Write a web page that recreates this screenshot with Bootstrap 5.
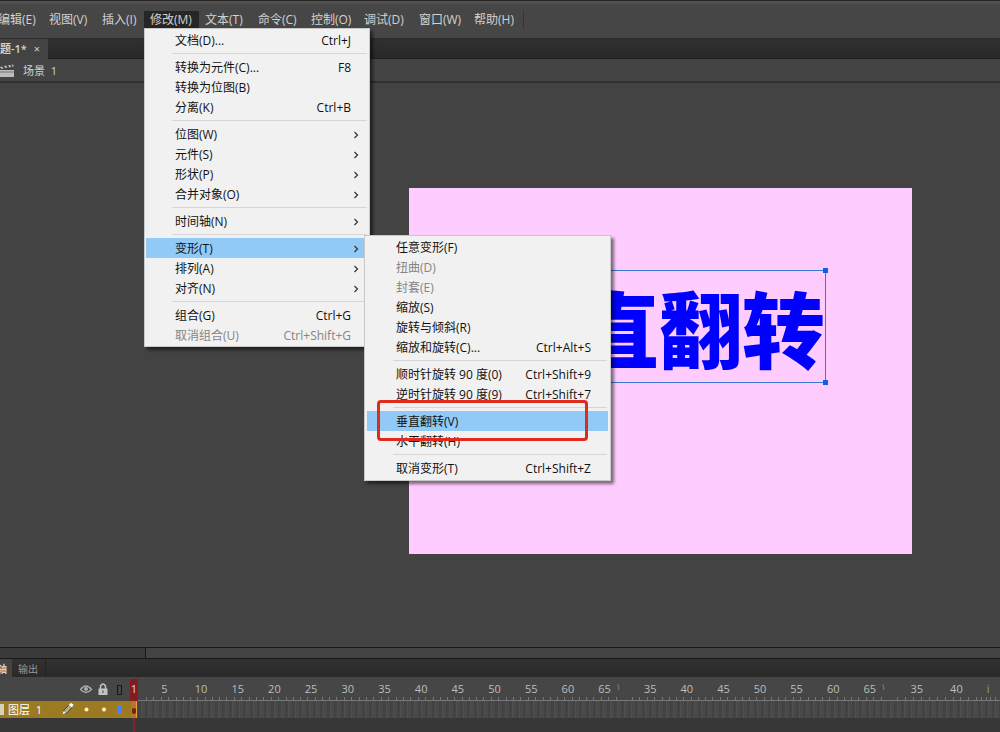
<!DOCTYPE html>
<html lang="zh-CN">
<head>
<meta charset="utf-8">
<meta name="viewport" content="width=device-width, initial-scale=1">
<title>动画编辑器</title>
<link rel="stylesheet" href="https://cdn.jsdelivr.net/npm/bootstrap@5.3.0/dist/css/bootstrap.min.css">
<style>
body{font:12px/20px "Open Sans","Noto Sans CJK SC",sans-serif;background:#434343;color:#d2d2d2}
button{font:inherit;color:inherit;background:none;border:0;padding:0;text-align:left}
/* menu bar */
.menubar{height:39px;background:linear-gradient(#252525 0 1px,#555 1px,#464646 5px);border-bottom:1px solid #2b2b2b;padding-top:11px}
.menubar ul{margin-left:-8px}
.menubar li{position:relative}
.top-btn{width:53px;height:17px;line-height:17px;padding-left:6px;white-space:nowrap;display:block}
.top-btn.first{width:51px}
.top-btn.narrow{width:48px}
.top-btn.wide{width:55px}
.top-btn.open{background:#262626}
.menubar-end{width:1px;height:17px;background:#343434}
/* pop-up menus */
.popup{position:absolute;z-index:10;background:#f1f1f1;border:1px solid #c9c9c9;padding:1px;color:#111;box-shadow:3px 3px 3px rgba(0,0,0,.5)}
.popup-main{left:0;top:17px;width:226px}
.popup-sub{left:218px;top:-3px;width:247px;padding:1px 2px 2px}
.cmd{width:100%;height:20px;line-height:18px;padding:2px 17px 0 29px;display:flex;justify-content:space-between;white-space:nowrap}
.cmd.parent{padding-right:8px;align-items:center}
.cmd.sel{background:#91c9f7}
.cmd:disabled{color:#858585}
.rule{height:7px;padding:3px 1px 3px 26px}
.rule::before{content:"";display:block;height:1px;background:#d5d5d5}
.callout{position:absolute;left:12px;top:164px;width:211px;height:41px;border:3px solid #df2a1e;border-radius:4px;pointer-events:none}
/* document tabs and scene bar */
.doctabs{height:20px;background:linear-gradient(#303030,#292929);border-bottom:1px solid #222}
.doctab{width:48px;background:#434343;font-size:11px;line-height:20px;white-space:nowrap;overflow:hidden}
.doctab span{font-weight:600}
.scene{height:24px;background:#444;border-bottom:2px solid #303030;font-size:11px;line-height:24px;padding-top:2px}
/* stage */
.stage{padding:105px 88px 0 0;min-height:0}
.artboard{width:503px;height:366px;background:#fcf;position:relative}
.textobj{position:absolute;right:86px;top:82px;height:113px;border:1px solid #3c76d8;color:#00f;font-size:83px;font-weight:900;line-height:117px;white-space:nowrap}
.grip{position:absolute;width:5px;height:5px;background:#0b5fe8}
.grip-tr{right:-3px;top:-3px}.grip-br{right:-3px;bottom:-3px}
.hbar{height:12px;background:#444;border:1px solid #181818;border-width:1px 0}
.hbar-left{width:146px;background:#3a3a3a;border-right:1px solid #181818}
/* timeline */
.panel-tabs{height:18px;background:linear-gradient(#313131,#292929);font-size:10px;line-height:20px}
.panel-tab{width:12px;background:#434343;overflow:hidden;white-space:nowrap;display:flex;justify-content:flex-end;padding-right:5px;font-weight:600}
.panel-tab2{width:34px;padding-left:6px;color:#999;border-right:1px solid #222}
.timeline{height:55px;background:#373737;position:relative}
.tl-left{width:131px}
.tl-head{height:24px;background:#464646}
.layer{height:17px;background:#9c7a22;color:#fff;font-size:11px;line-height:17px}
.ruler{height:24px;background:#464646;border-bottom:1px solid #777;font-size:11px;line-height:24px;color:#bdbdbd;display:grid;grid-template-columns:496fr 265fr 108fr}
.seg{display:flex;min-width:0}
.seg span{flex:5 1 0;text-align:center;min-width:0;background:repeating-linear-gradient(90deg,#777 0 1px,transparent 1px 20%) 0 20px/100% 3px no-repeat}
.seg1{padding:0 4px 0 15px;position:relative}
.seg2,.seg3{padding-left:5px}
.seg2{padding-right:4px;position:relative}
.seg i{position:absolute;right:6px;font-style:normal;font-size:9px;line-height:20px;color:#888}
.seg3 span:last-child{flex-grow:3;color:#999}
.frames{height:17px;background:repeating-linear-gradient(90deg,#434343 0 3px,#505050 3px 4px,#494949 4px 7px)}
.playhead{position:absolute;left:130px;top:2px;width:8px;height:22px;background:#861a20;color:#ddd;text-align:center;font-size:11px;line-height:20px}
.playline{position:absolute;left:133px;top:24px;width:2px;height:31px;background:#7d2528}
.keyframe{position:absolute;left:131px;top:24px;width:6px;height:17px;background:#b97428;border-right:1px solid #e0a040}
.keyframe::after{content:"";display:block;width:4px;height:6px;margin:7px 0 0 1px;background:#6d2a10;border-radius:2px}
</style>
</head>
<body class="vh-100 d-flex flex-column overflow-hidden">
<nav class="menubar flex-shrink-0">
<ul class="list-unstyled d-flex mb-0">
<li><button class="top-btn first">编辑(E)</button></li>
<li><button class="top-btn">视图(V)</button></li>
<li><button class="top-btn narrow">插入(I)</button></li>
<li><button class="top-btn wide open" aria-expanded="true">修改(M)</button>
  <div class="popup popup-main">
    <button class="cmd"><span>文档(D)...</span><span>Ctrl+J</span></button>
    <div class="rule"></div>
    <button class="cmd"><span>转换为元件(C)...</span><span>F8</span></button>
    <button class="cmd"><span>转换为位图(B)</span></button>
    <button class="cmd"><span>分离(K)</span><span>Ctrl+B</span></button>
    <div class="rule"></div>
    <button class="cmd parent">位图(W)<svg width="7" height="8"><path d="M1.500 1 4.500 4 1.500 7" fill="none" stroke="#333" stroke-width="1.200"/></svg></button>
    <button class="cmd parent">元件(S)<svg width="7" height="8"><path d="M1.500 1 4.500 4 1.500 7" fill="none" stroke="#333" stroke-width="1.200"/></svg></button>
    <button class="cmd parent">形状(P)<svg width="7" height="8"><path d="M1.500 1 4.500 4 1.500 7" fill="none" stroke="#333" stroke-width="1.200"/></svg></button>
    <button class="cmd parent">合并对象(O)<svg width="7" height="8"><path d="M1.500 1 4.500 4 1.500 7" fill="none" stroke="#333" stroke-width="1.200"/></svg></button>
    <div class="rule"></div>
    <button class="cmd parent">时间轴(N)<svg width="7" height="8"><path d="M1.500 1 4.500 4 1.500 7" fill="none" stroke="#333" stroke-width="1.200"/></svg></button>
    <div class="rule"></div>
    <div class="position-relative">
      <button class="cmd parent sel" aria-expanded="true">变形(T)<svg width="7" height="8"><path d="M1.500 1 4.500 4 1.500 7" fill="none" stroke="#333" stroke-width="1.200"/></svg></button>
      <div class="popup popup-sub">
        <button class="cmd"><span>任意变形(F)</span></button>
        <button class="cmd" disabled><span>扭曲(D)</span></button>
        <button class="cmd" disabled><span>封套(E)</span></button>
        <button class="cmd"><span>缩放(S)</span></button>
        <button class="cmd"><span>旋转与倾斜(R)</span></button>
        <button class="cmd"><span>缩放和旋转(C)...</span><span>Ctrl+Alt+S</span></button>
        <div class="rule"></div>
        <button class="cmd"><span>顺时针旋转 90 度(0)</span><span>Ctrl+Shift+9</span></button>
        <button class="cmd"><span>逆时针旋转 90 度(9)</span><span>Ctrl+Shift+7</span></button>
        <div class="rule"></div>
        <button class="cmd sel"><span>垂直翻转(V)</span></button>
        <button class="cmd"><span>水平翻转(H)</span></button>
        <div class="rule"></div>
        <button class="cmd"><span>取消变形(T)</span><span>Ctrl+Shift+Z</span></button>
        <div class="callout"></div>
      </div>
    </div>
    <button class="cmd parent">排列(A)<svg width="7" height="8"><path d="M1.500 1 4.500 4 1.500 7" fill="none" stroke="#333" stroke-width="1.200"/></svg></button>
    <button class="cmd parent">对齐(N)<svg width="7" height="8"><path d="M1.500 1 4.500 4 1.500 7" fill="none" stroke="#333" stroke-width="1.200"/></svg></button>
    <div class="rule"></div>
    <button class="cmd"><span>组合(G)</span><span>Ctrl+G</span></button>
    <button class="cmd" disabled><span>取消组合(U)</span><span>Ctrl+Shift+G</span></button>
  </div>
</li>
<li><button class="top-btn">文本(T)</button></li>
<li><button class="top-btn">命令(C)</button></li>
<li><button class="top-btn">控制(O)</button></li>
<li><button class="top-btn wide">调试(D)</button></li>
<li><button class="top-btn wide">窗口(W)</button></li>
<li><button class="top-btn wide">帮助(H)</button></li>
<li class="menubar-end"></li>
</ul>
</nav>
<div class="doctabs flex-shrink-0"><div class="doctab d-flex justify-content-between pe-1"><span>题-1*</span><button class="px-1" aria-label="关闭">×</button></div></div>
<div class="scene d-flex align-items-center flex-shrink-0">
<svg width="15" height="14" viewBox="0 0 15 14" fill="#bcbcbc"><path d="M0 6h14v7H0zM0 3l2-.5 1.500 2-2 .5zM4 2l2-.5 1.500 2-2 .5zM8 1.500l2-.5 1.500 2-2 .5zM11.500.8l1.500-.3.800 2-1 .4z"/><path d="M0 8h14" stroke="#777"/></svg>
<span class="ps-2">场景&nbsp; 1</span>
</div>
<main class="stage flex-grow-1 d-flex justify-content-end">
<div class="artboard flex-shrink-0"><div class="textobj">垂直翻转<span class="grip grip-tr"></span><span class="grip grip-br"></span></div></div>
</main>
<div class="hbar flex-shrink-0 d-flex"><div class="hbar-left"></div></div>
<div class="panel-tabs d-flex flex-shrink-0"><button class="panel-tab" aria-label="时间轴">轴</button><button class="panel-tab2">输出</button></div>
<section class="timeline d-flex flex-shrink-0">
<div class="tl-left flex-shrink-0">
  <div class="tl-head">
  <svg width="131" height="24" fill="none"><path d="M80.500 12.500q5.500-7 11 0-5.500 6-11 0z" stroke="#aaa" stroke-width="1.300"/><circle cx="86" cy="12" r="2" fill="#aaa"/><path d="M98.500 11.500h9V18h-9z" fill="#c4c4c4"/><path d="M100.500 12V9q2.500-4 5 0v3" stroke="#c4c4c4" stroke-width="1.500"/><path d="M103 13.500v2.500" stroke="#444"/><path d="M117.500 8.500h4v9h-4z" stroke="#161616"/></svg>
  </div>
  <div class="layer d-flex">
  <svg width="8" height="17"><path d="M0 3h4v11H0z" fill="#d8d0bb"/></svg><span>图层&nbsp; 1</span>
  <svg class="ms-auto" width="73" height="17"><path d="M5 13l1-4 5-5 3 2.500-5 5.500z" fill="#b0aa90" stroke="#4f4525"/><path d="M10.500 4l2.500-2 2.500 1.500-1.500 3z" fill="#fff"/><path d="M4.500 13.500l1-3.500 2.500 2z" fill="#eee"/><circle cx="28.500" cy="8.500" r="2" fill="#fff4c8"/><circle cx="46" cy="8.500" r="2" fill="#fff4c8"/><path d="M59 4h5v9h-5z" fill="#4d80ff"/></svg>
  </div>
</div>
<div class="flex-grow-1">
  <div class="ruler">
  <div class="seg seg1"><span>5</span><span>10</span><span>15</span><span>20</span><span>25</span><span>30</span><span>35</span><span>40</span><span>45</span><span>50</span><span>55</span><span>60</span><span>65</span><i>١</i></div>
  <div class="seg seg2"><span>35</span><span>40</span><span>45</span><span>50</span><span>55</span><span>60</span><span>65</span><i>١</i></div>
  <div class="seg seg3"><span>35</span><span>40</span><span>i</span></div>
  </div>
  <div class="frames"></div>
</div>
<div class="playline"></div><div class="keyframe"></div><div class="playhead">1</div>
</section>
<script src="https://cdn.jsdelivr.net/npm/bootstrap@5.3.0/dist/js/bootstrap.bundle.min.js"></script>
</body>
</html>
